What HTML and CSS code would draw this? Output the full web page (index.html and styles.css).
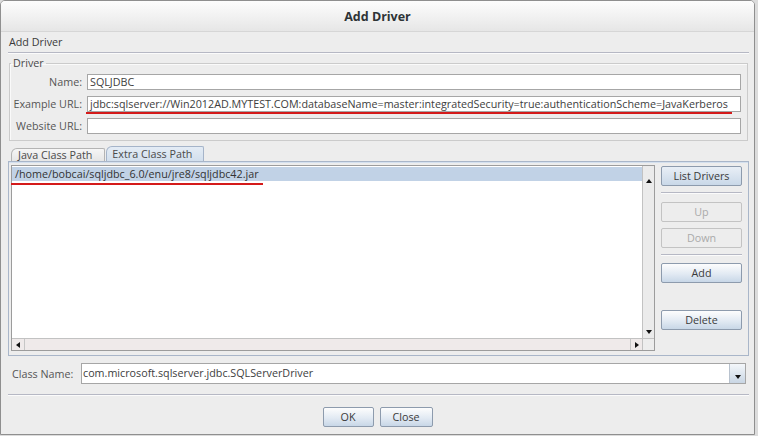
FILE: index.html
```html
<!DOCTYPE html>
<html>
<head>
  <title>Add Driver</title>
  <link rel="stylesheet" href="styles.css">
</head>
<body>

<div class="window">
  <div class="titlebar">Add Driver</div>

  <div class="content">
    <div class="heading">Add Driver</div>
    <div class="sep"></div>

    <!-- Driver details -->
    <fieldset class="group">
      <legend>Driver</legend>
      <div class="row">
        <label>Name:</label>
        <div class="field">SQLJDBC</div>
      </div>
      <div class="row">
        <label>Example URL:</label>
        <div class="field">jdbc:sqlserver://Win2012AD.MYTEST.COM:databaseName=master:integratedSecurity=true:authenticationScheme=JavaKerberos</div>
        <span class="underline url-mark"></span>
      </div>
      <div class="row">
        <label>Website URL:</label>
        <div class="field"></div>
      </div>
    </fieldset>

    <!-- Class path tabs -->
    <div class="tabs">
      <div class="tab">Java Class Path</div>
      <div class="tab active">Extra Class Path</div>
    </div>
    <div class="tabpanel">
      <div class="listbox">
        <div class="list-area">
          <div class="list">
            <div class="item selected">/home/bobcai/sqljdbc_6.0/enu/jre8/sqljdbc42.jar</div>
          </div>
          <div class="vscroll">
            <span class="arrow up"></span>
            <span class="arrow down"></span>
          </div>
        </div>
        <div class="hscroll">
          <div class="hbtn"><span class="arrow left"></span></div>
          <div class="htrack"></div>
          <div class="hbtn right-btn"><span class="arrow right"></span></div>
          <div class="corner"></div>
        </div>
        <span class="underline path-mark"></span>
      </div>

      <div class="side">
        <button class="btn list-drivers">List Drivers</button>
        <div class="sep side-sep"></div>
        <button class="btn up" disabled>Up</button>
        <button class="btn down" disabled>Down</button>
        <div class="sep side-sep2"></div>
        <button class="btn add">Add</button>
        <button class="btn delete">Delete</button>
      </div>
    </div>

    <!-- Class name -->
    <div class="class-row">
      <label>Class Name:</label>
      <div class="combo">
        <div class="combo-text">com.microsoft.sqlserver.jdbc.SQLServerDriver</div>
        <div class="combo-btn"><span class="arrow down"></span></div>
      </div>
    </div>

    <div class="sep bottom-sep"></div>

    <div class="actions">
      <button class="btn ok">OK</button>
      <button class="btn close">Close</button>
    </div>
  </div>
</div>

</body>
</html>
```

FILE: styles.css
```css
* {
  box-sizing: border-box;
}

body {
  margin: 0;
  background-color: #dcdcdc;
  font-family: "Open Sans", "DejaVu Sans", sans-serif;
  font-size: 10.75px;
  color: #3d3d3d;
}

.window {
  width: 755px;
  height: 435px;
  background-color: #ededed;
  border: 1px solid #8f8f8f;
  border-radius: 5px 5px 0 0;
  display: flex;
  flex-direction: column;
  overflow: hidden;
}

.titlebar {
  flex: none;
  height: 31px;
  display: flex;
  align-items: center;
  justify-content: center;
  font-size: 12.5px;
  font-weight: bold;
  color: #2e3436;
  background: linear-gradient(#fdfdfd, #e6e6e6);
  border-bottom: 1px solid #d6d6d6;
}

.content {
  flex: 1;
  display: flex;
  flex-direction: column;
  padding: 3px 5px 0 7px;
}

.heading {
  line-height: 14px;
  padding-left: 1px;
  color: #3a3a3a;
}

.sep {
  height: 2px;
  border-top: 1px solid #b6b8c4;
  border-bottom: 1px solid #fbfbfb;
  margin-top: 3px;
}

/* ---- Driver group ---- */

.group {
  margin: 2px 1px 0 1px;
  padding: 4px 6px 6px 0;
  border: 1px solid #cbcbcb;
  box-shadow: inset 1px 1px 0 #fafafa;
}

.group legend {
  margin-left: 1px;
  padding: 0 2px;
  line-height: 14px;
  color: #4a4a4a;
}

.row {
  position: relative;
  display: flex;
  align-items: center;
  height: 16px;
}

.row + .row {
  margin-top: 6px;
}

.row label {
  flex: none;
  width: 72px;
  text-align: right;
  margin-right: 5px;
  color: #555;
}

.field {
  flex: 1;
  height: 16px;
  background-color: #fff;
  border: 1px solid #a6a6a6;
  padding: 0 2px;
  line-height: 14px;
  white-space: nowrap;
  overflow: hidden;
}

.underline {
  position: absolute;
  height: 2px;
  background-color: #d41a1a;
}

.url-mark {
  left: 76px;
  top: 16px;
  width: 646px;
}

/* ---- Tabs ---- */

.tabs {
  display: flex;
  align-items: flex-end;
  height: 15px;
  margin-top: 5px;
  padding-left: 3px;
}

.tab {
  height: 13px;
  padding: 0 12px 0 6px;
  line-height: 12px;
  border: 1px solid #b4b4b4;
  border-bottom: none;
  border-radius: 6px 2px 0 0;
  background: linear-gradient(#f6f6f6, #e6e6e6);
  color: #4a4a4a;
}

.tab.active {
  height: 15px;
  line-height: 14px;
  margin-left: 1px;
  padding: 0 11px 0 5px;
  border-color: #a5b4c9;
  background: linear-gradient(#e4ecf5, #d2dfed);
}

.tabpanel {
  flex: none;
  height: 195px;
  display: flex;
  padding: 3px 6px 4px 2px;
  border: 1px solid #a9b6c9;
  box-shadow: inset 0 1px 0 #d4e0ee;
}

.listbox {
  position: relative;
  width: 644px;
  display: flex;
  flex-direction: column;
  border: 1px solid #9c9c9c;
  background-color: #fff;
}

.list-area {
  flex: 1;
  display: flex;
}

.list {
  flex: 1;
  padding-top: 1px;
}

.item {
  height: 14px;
  line-height: 14px;
  padding-left: 3px;
  white-space: nowrap;
}

.item.selected {
  background-color: #c1d2e6;
  color: #333;
}

.path-mark {
  left: -1px;
  top: 17px;
  width: 252px;
}

.vscroll {
  width: 12px;
  display: flex;
  flex-direction: column;
  justify-content: space-between;
  align-items: center;
  padding: 5px 0 4px;
  background-color: #ebebeb;
  border-left: 1px solid #c2c2c2;
}

.hscroll {
  flex: none;
  height: 12px;
  display: flex;
  background-color: #efeaea;
  border-top: 1px solid #c2c2c2;
}

.hbtn {
  width: 13px;
  display: flex;
  align-items: center;
  justify-content: center;
  border-right: 1px solid #c6c6c6;
}

.hbtn.right-btn {
  width: 12px;
  border-right: none;
  border-left: 1px solid #c6c6c6;
}

.htrack {
  flex: 1;
}

.corner {
  width: 12px;
  background-color: #ededed;
  border-left: 1px solid #c2c2c2;
}

.arrow {
  display: block;
  width: 0;
  height: 0;
  border: 3px solid transparent;
}

.arrow.up {
  border-bottom: 4px solid #111;
  border-top: none;
}

.arrow.down {
  border-top: 4px solid #111;
  border-bottom: none;
}

.arrow.left {
  border-right: 4px solid #111;
  border-left: none;
}

.arrow.right {
  border-left: 4px solid #111;
  border-right: none;
}

/* ---- Buttons ---- */

.btn {
  height: 20px;
  padding: 0;
  font-family: inherit;
  font-size: 10.75px;
  color: #3a3a3a;
  border: 1px solid #8d9bad;
  border-radius: 2px;
  background: linear-gradient(#fdfdfd, #e2eaf3 55%, #c8d7e7);
  cursor: pointer;
}

.btn:disabled {
  color: #aaa;
  border-color: #c3c3c3;
  background: #ededed;
  cursor: default;
}

.side {
  width: 81px;
  margin-left: 6px;
  display: flex;
  flex-direction: column;
  padding-top: 1px;
}

.list-drivers {
  background: linear-gradient(#e9eff6, #c9d8e8);
}

.side-sep {
  margin-top: 6px;
}

.up {
  margin-top: 8px;
}

.down {
  margin-top: 6px;
}

.side-sep2 {
  margin-top: 6px;
}

.add {
  margin-top: 7px;
}

.delete {
  margin-top: 27px;
}

/* ---- Class name ---- */

.class-row {
  display: flex;
  align-items: center;
  height: 21px;
  margin-top: 7px;
  margin-right: 3px;
}

.class-row label {
  flex: none;
  width: 73px;
  padding-left: 4px;
  color: #555;
}

.combo {
  flex: 1;
  height: 21px;
  display: flex;
  background-color: #fff;
  border: 1px solid #a6a6a6;
}

.combo-text {
  flex: 1;
  padding-left: 1px;
  line-height: 19px;
  white-space: nowrap;
}

.combo-btn {
  width: 16px;
  display: flex;
  align-items: center;
  justify-content: center;
  border-left: 1px solid #b8c2ce;
  background: linear-gradient(#f4f7fa, #c9d6e4);
}

.bottom-sep {
  margin-top: 10px;
}

.actions {
  display: flex;
  justify-content: center;
  gap: 6px;
  margin-top: 11px;
  padding-right: 2px;
}

.ok {
  width: 51px;
}

.close {
  width: 53px;
}
```
